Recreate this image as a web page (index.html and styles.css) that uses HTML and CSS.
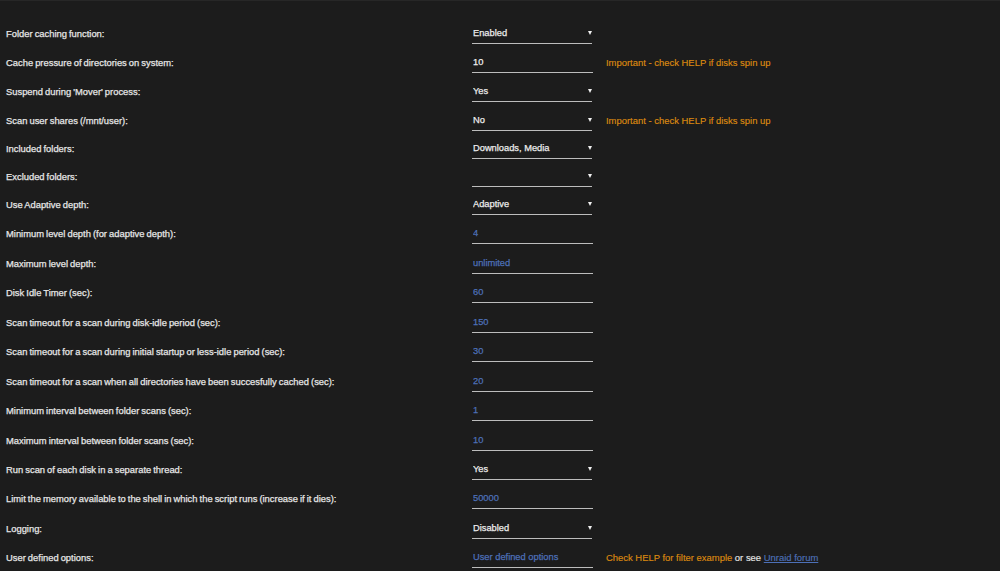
FILE: index.html
```html
<!DOCTYPE html>
<html lang="en">
<head>
<meta charset="utf-8">
<title>Folder Caching Settings</title>
<link rel="stylesheet" href="styles.css">
</head>
<body>
<div class="page">
  <form class="settings">
    <div class="row sel">
      <label class="lbl">Folder caching function:</label>
      <div class="ctl dd"><select class="field"><option>Enabled</option><option>Disabled</option></select></div>
    </div>
    <div class="row txt">
      <label class="lbl">Cache pressure of directories on system:</label>
      <div class="ctl"><input class="field strong" type="text" value="10"></div>
      <span class="note warn">Important - check HELP if disks spin up</span>
    </div>
    <div class="row sel">
      <label class="lbl">Suspend during 'Mover' process:</label>
      <div class="ctl dd"><select class="field"><option>Yes</option><option>No</option></select></div>
    </div>
    <div class="row sel">
      <label class="lbl">Scan user shares (/mnt/user):</label>
      <div class="ctl dd"><select class="field"><option>No</option><option>Yes</option></select></div>
      <span class="note warn">Important - check HELP if disks spin up</span>
    </div>
    <div class="row chk">
      <label class="lbl">Included folders:</label>
      <div class="ctl dd"><select class="field"><option>Downloads, Media</option></select></div>
    </div>
    <div class="row chk">
      <label class="lbl">Excluded folders:</label>
      <div class="ctl dd"><select class="field"><option></option></select></div>
    </div>
    <div class="row sel">
      <label class="lbl">Use Adaptive depth:</label>
      <div class="ctl dd"><select class="field"><option>Adaptive</option><option>Fixed</option></select></div>
    </div>
    <div class="row txt">
      <label class="lbl">Minimum level depth (for adaptive depth):</label>
      <div class="ctl"><input class="field" type="text" value="4"></div>
    </div>
    <div class="row txt">
      <label class="lbl">Maximum level depth:</label>
      <div class="ctl"><input class="field" type="text" placeholder="unlimited"></div>
    </div>
    <div class="row txt">
      <label class="lbl">Disk Idle Timer (sec):</label>
      <div class="ctl"><input class="field" type="text" value="60"></div>
    </div>
    <div class="row txt">
      <label class="lbl">Scan timeout for a scan during disk-idle period (sec):</label>
      <div class="ctl"><input class="field" type="text" value="150"></div>
    </div>
    <div class="row txt">
      <label class="lbl">Scan timeout for a scan during initial startup or less-idle period (sec):</label>
      <div class="ctl"><input class="field" type="text" value="30"></div>
    </div>
    <div class="row txt">
      <label class="lbl">Scan timeout for a scan when all directories have been succesfully cached (sec):</label>
      <div class="ctl"><input class="field" type="text" value="20"></div>
    </div>
    <div class="row txt">
      <label class="lbl">Minimum interval between folder scans (sec):</label>
      <div class="ctl"><input class="field" type="text" value="1"></div>
    </div>
    <div class="row txt">
      <label class="lbl">Maximum interval between folder scans (sec):</label>
      <div class="ctl"><input class="field" type="text" value="10"></div>
    </div>
    <div class="row sel">
      <label class="lbl">Run scan of each disk in a separate thread:</label>
      <div class="ctl dd"><select class="field"><option>Yes</option><option>No</option></select></div>
    </div>
    <div class="row txt">
      <label class="lbl">Limit the memory available to the shell in which the script runs (increase if it dies):</label>
      <div class="ctl"><input class="field" type="text" value="50000"></div>
    </div>
    <div class="row sel">
      <label class="lbl">Logging:</label>
      <div class="ctl dd"><select class="field"><option>Disabled</option><option>Enabled</option></select></div>
    </div>
    <div class="row txt">
      <label class="lbl">User defined options:</label>
      <div class="ctl"><input class="field" type="text" placeholder="User defined options"></div>
      <span class="note"><span class="warn">Check HELP for filter example</span> or see <a class="link" href="#">Unraid forum</a></span>
    </div>
  </form>
</div>
</body>
</html>
```

FILE: styles.css
```css
html, body {
  margin: 0;
  padding: 0;
  background: #1c1c1c;
}

body {
  font-family: "Liberation Sans", Arial, sans-serif;
  font-size: 9.3px;
  font-weight: normal;
  color: #e6e6e6;
  -webkit-text-stroke: 0.25px currentColor;
}

.page {
  border-top: 1px solid #272727;
  padding-top: 17.5px;
  min-height: 560px;
}

.settings {
  display: flex;
  flex-direction: column;
}

.row {
  display: grid;
  grid-template-columns: 472px 120px auto;
  align-items: center;
  height: 29px;
}

.row.txt { height: 29.5px; }
.row.chk { height: 27.5px; }

.lbl {
  padding-left: 6px;
  white-space: nowrap;
  font-size: 9.4px;
  word-spacing: -0.55px;
}

.ctl {
  position: relative;
  width: 120px;
}

.field {
  display: block;
  box-sizing: content-box;
  width: 120px;
  height: 20px;
  margin: 0;
  padding: 0 0 0 1px;
  border: 0;
  border-bottom: 1px solid #bdbdbd;
  border-radius: 0;
  background: transparent;
  font: inherit;
  line-height: 20px;
  color: #4d70b8;
  outline: none;
  -webkit-appearance: none;
  appearance: none;
}

.field::placeholder {
  color: #4d70b8;
  opacity: 1;
}

.field.strong {
  color: #f0f0f0;
}

select.field {
  color: #ececec;
  width: 119px;
}

.dd::after {
  content: "";
  position: absolute;
  right: 0;
  top: 8px;
  width: 0;
  height: 0;
  border-left: 2.5px solid transparent;
  border-right: 2.5px solid transparent;
  border-top: 4px solid #f0f0f0;
  pointer-events: none;
}

.note {
  padding-left: 14px;
  white-space: nowrap;
  color: #e6e6e6;
  font-size: 9.45px;
  -webkit-text-stroke: 0.15px currentColor;
}

.warn {
  color: #dd8a10;
}

.link {
  color: #4d70b8;
  text-decoration: underline;
}
```
